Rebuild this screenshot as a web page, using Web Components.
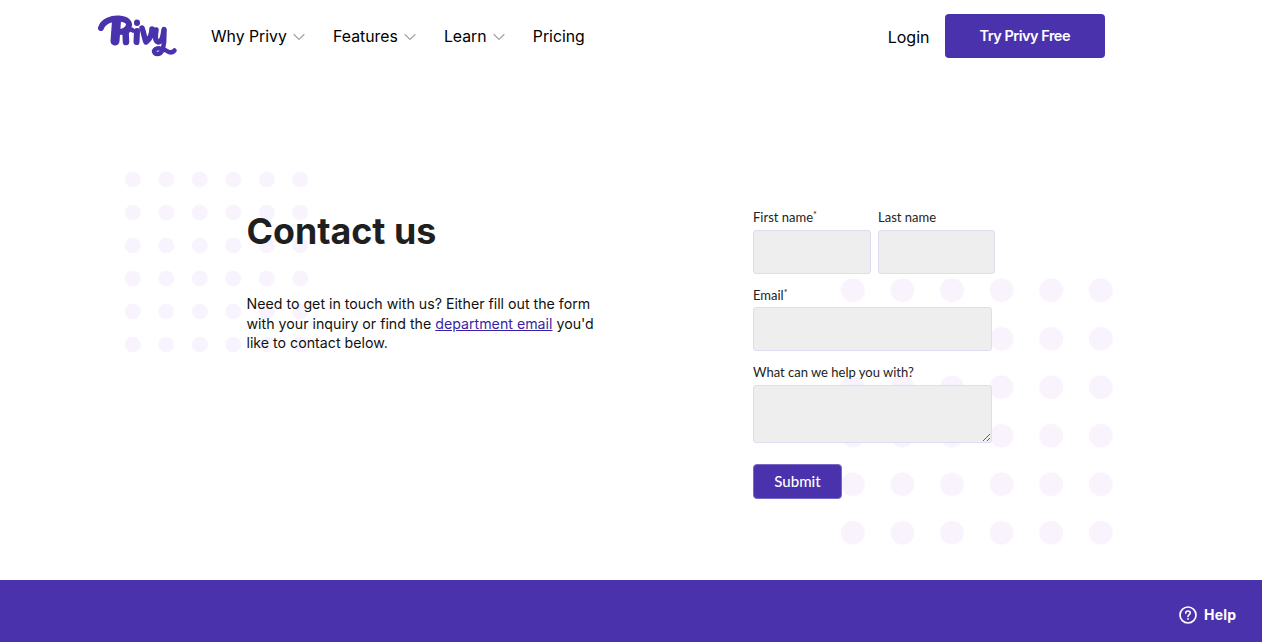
<!DOCTYPE html>
<html lang="en"><head><meta charset="utf-8"><title>Contact us</title>
<style>
html,body{margin:0;padding:0;background:#fff;overflow:hidden;height:642px}
body{font-family:Inter,"Liberation Sans",sans-serif;color:#111;width:1262px}
</style></head>
<body>
<privy-page>
  <privy-header slot="header"></privy-header>
  <contact-hero slot="main">
    <h-text slot="copy"></h-text>
    <contact-form slot="form"></contact-form>
  </contact-hero>
  <privy-footer slot="footer"></privy-footer>
</privy-page>
<script>
function def(name, html){
  customElements.define(name, class extends HTMLElement{
    constructor(){super();this.attachShadow({mode:'open'}).innerHTML=html;}
  });
}
def('privy-page',`<style>:host{display:flex;flex-direction:column;height:642px}
::slotted([slot=main]){flex:1}</style>
<slot name="header"></slot><slot name="main"></slot><slot name="footer"></slot>`);

def('nav-item',`<style>:host{display:inline-flex;align-items:center;gap:6px;font:400 15.8px/20px Inter,sans-serif;color:#000}
svg{display:block;margin-top:1px}</style><slot></slot>
<svg width="12" height="8" viewBox="0 0 12 8" fill="none"><path d="M.7 1.2L6 6.400L11.300 1.200" stroke="#a3a3a8" stroke-width="1.200"/></svg>`);

def('privy-logo',`<style>:host{display:block;width:80px;height:44px}svg{display:block}</style>
<svg width="80" height="44" viewBox="0 0 80 44" fill="none" stroke="#4b32ad" stroke-linecap="round" stroke-linejoin="round" role="img" aria-label="Privy">
<path d="M3 13C5 6 14 3 21 3.500C29 4 33 8 30 12.500C27.500 16 24 17 21 17" stroke-width="6"/>
<path d="M18.500 6L17 26" stroke-width="9"/>
<path d="M27.500 16L28 27" stroke-width="6.500"/>
<path d="M29 17C31 14 33 14 35 15.500" stroke-width="4.500"/>
<path d="M39 16L38.500 27" stroke-width="6"/>
<path d="M39 7.500L39 8" stroke-width="6"/>
<path d="M44 13C46 18 46.500 24 48 27C52 24 54 20 54 14" stroke-width="5.500"/>
<path d="M58 15C57 21 57 26 60 27C63 27 65 23 66 15" stroke-width="5.500"/>
<path d="M66 14C67 24 66 31 64 36C62 40 56 40 56 36C58 32 65 33 69 36C72 38 74.500 38 76.500 35.500" stroke-width="4.500"/>
</svg>`);

def('privy-header',`<style>
:host{display:flex;align-items:center;height:72px;padding:0 157px 0 98px;box-sizing:border-box;font:400 15.800px/20px Inter,sans-serif;color:#000}
.logo{margin-top:1px;margin-right:33px}
nav{display:flex;align-items:center;gap:28.200px;flex:1;padding-top:1px}
.login{font-size:16px;margin-right:15px;padding-top:1px}
.cta{display:flex;align-items:center;justify-content:center;width:160.500px;height:44px;box-sizing:border-box;background:#4b32ad;border-radius:4px;color:#fff;font:600 14.500px/18px Inter,sans-serif;letter-spacing:-.5px;text-decoration:none}
</style>
<privy-logo class="logo"></privy-logo>
<nav><nav-item>Why Privy</nav-item><nav-item>Features</nav-item><nav-item>Learn</nav-item><span>Pricing</span></nav>
<span class="login">Login</span><a class="cta">Try Privy Free</a>`);

def('dot-field',`<style>
:host{display:block;position:absolute;pointer-events:none;
background-size:var(--sx) var(--sy);background-repeat:repeat;
background-image:radial-gradient(circle at center,#f8f3fd var(--r),transparent calc(var(--r) + .7px))}
</style>`);

def('h-text',`<style>
:host{display:block;width:360px;color:#111}
h1{margin:0 0 41px;font:700 35.800px/43px Inter,sans-serif;color:#1f1f1f}
p{margin:0;font:400 14.200px/19.500px Inter,sans-serif;color:#111}
a{color:#3a1fa8}
</style>
<h1>Contact us</h1>
<p>Need to get in touch with us? Either fill out the form<br>with your inquiry or find the <a href="#">department email</a> you'd<br>like to contact below.</p>`);

def('contact-hero',`<style>
:host{display:grid;grid-template-columns:360px 239px;column-gap:146.500px;align-content:start;position:relative;padding:138px 0 0 246.500px;box-sizing:border-box}
dot-field.a{left:115.750px;top:91px;width:201px;height:198px;--sx:33.500px;--sy:33px;--r:7.500px}
dot-field.b{left:828px;top:193.500px;width:297.500px;height:291px;--sx:49.600px;--sy:48.500px;--r:11.500px}
.c{position:relative;grid-column:1}
.f{position:relative;margin-top:-1px}
</style>
<dot-field class="a"></dot-field><dot-field class="b"></dot-field>
<div class="c"><slot name="copy"></slot></div><div class="f"><slot name="form"></slot></div>`);

def('contact-form',`<style>
:host{display:block;width:260px;font:400 13px/16px "Lato","Open Sans",sans-serif;color:#222}
form{display:flex;flex-direction:column}
.row{display:flex;gap:7px}
label{display:block}
input,textarea{display:block;box-sizing:border-box;margin:5px 0 0;padding:4px;background:#eee;border:1px solid #e0dcf2;border-radius:3px;width:239px;height:44px;font:inherit}
.row input{width:118px}
.row label+label input{width:117px}
.g{margin-top:13px}
.g input{margin-top:4px}
.g2{margin-top:13px}
textarea{height:58px;resize:vertical}
button{align-self:flex-start;margin-top:21px;width:89px;height:35px;border:1px solid #7a68c6;background:#4b32ad;border-radius:4px;color:#fff;font:500 15px/18px "Lato",sans-serif;padding:0 0 2px}
sup{font-size:9px;line-height:0;vertical-align:4px}
</style>
<form onsubmit="return false">
<div class="row"><label>First name<sup>*</sup><input aria-label="First name"></label><label>Last name<input aria-label="Last name"></label></div>
<label class="g">Email<sup>*</sup><input aria-label="Email"></label>
<label class="g2">What can we help you with?<textarea aria-label="Message"></textarea></label>
<button>Submit</button>
</form>`);

def('privy-footer',`<style>
:host{display:block;position:relative;height:62px;background:#4b32ad}
.help{position:absolute;left:1179px;top:26px;display:flex;align-items:center;gap:7px;color:#fff;font:700 14px/18px Inter,sans-serif;letter-spacing:.2px}
svg{display:block}
</style>
<div class="help"><svg width="18" height="18" viewBox="0 0 18 18" fill="none" stroke="#fff"><circle cx="9" cy="9" r="8" stroke-width="1.700"/><path d="M6.700 7.100C6.800 5.700 7.800 5 9 5C10.300 5 11.300 5.800 11.300 7C11.300 8.500 9 8.600 9 10.400" stroke-width="1.600" stroke-linecap="round"/><circle cx="9" cy="12.900" r=".7" fill="#fff" stroke-width=".6"/></svg><span>Help</span></div>`);
</script>
</body></html>
